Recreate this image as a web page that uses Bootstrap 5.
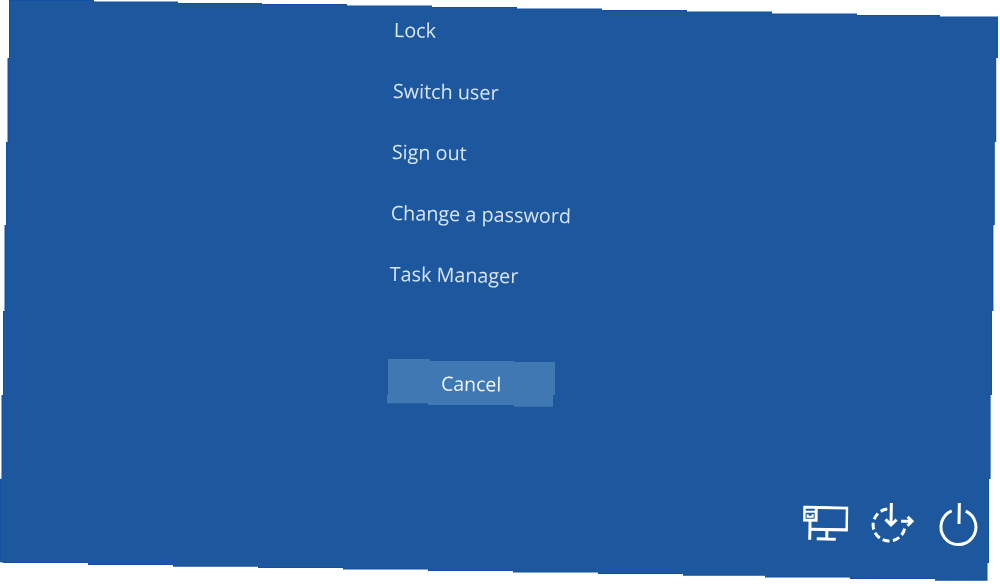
<!DOCTYPE html>
<html lang="en">
<head>
  <meta charset="UTF-8" />
  <meta name="viewport" content="width=device-width, initial-scale=1.0"/>
  <title>Security options</title>
  <link href="https://cdn.jsdelivr.net/npm/bootstrap@5.3.0/dist/css/bootstrap.min.css" rel="stylesheet"/>
  <style>
    html, body { height: 100%; }
    body { background-color: #fff; overflow: hidden; font-family: "Open Sans", "Noto Sans", sans-serif; }
    .screen-panel {
      --panel-shape: polygon(9px 0, 94px 0, 94px 1.5px, 178px 1.5px, 178px 3px, 262px 3px, 262px 4px, 347px 4px, 347px 5.5px, 432px 5.5px, 432px 7px, 517px 7px, 517px 8.5px, 602px 8.5px, 602px 10px, 687px 10px, 687px 11.5px, 772px 11.5px, 772px 13.5px, 857px 13.5px, 857px 15px, 940px 15px, 940px 16.5px, 998px 16.5px, 998px 58px, 996.2px 58px, 996.2px 142px, 994.8px 142px, 994.8px 225px, 993.4px 225px, 993.4px 311px, 992px 311px, 992px 395px, 990.6px 395px, 990.6px 479px, 989px 479px, 989px 563px, 987.5px 563px, 987.5px 580.7px, 935px 580.7px, 935px 579px, 850px 579px, 850px 577.5px, 765px 577.5px, 765px 575.7px, 683px 575.7px, 683px 574px, 598px 574px, 598px 572.5px, 513px 572.5px, 513px 571px, 428px 571px, 428px 569.5px, 343px 569.5px, 343px 568px, 258px 568px, 258px 566.7px, 173px 566.7px, 173px 565px, 88px 565px, 88px 563px, 4px 563px, 0 562px, 0 479px, 1.5px 479px, 1.5px 395px, 3px 395px, 3px 311px, 4.5px 311px, 4.5px 225px, 6px 225px, 6px 142px, 7.5px 142px, 7.5px 58px, 9px 58px);
      position: relative;
      width: 1000px; height: 584px;
      background-color: #1250a4;
      clip-path: var(--panel-shape);
    }
    .screen-panel::before {
      content: ""; position: absolute; inset: 0;
      background-color: #1d589f;
      clip-path: var(--panel-shape);
      transform: scale(.998, .9966);
    }
    .panel-content { position: relative; filter: blur(.35px); }
    .option-list {
      padding-left: 394.5px; margin-top: -1px;
      transform: rotate(1deg); transform-origin: 394px 0;
    }
    .option-item {
      display: block; width: max-content;
      color: #d8e4f1; font-size: 19.8px; line-height: 61px;
      text-decoration: none;
    }
    .cancel-wrap { padding-left: 387px; margin-top: 55px; }
    .cancel-btn {
      width: 168px; height: 48px; padding: 2px 0 0; border: 0; border-radius: 0;
      background-color: #3f78b3; color: #f2f6fa; font-size: 19.5px;
      clip-path: polygon(1px 0, 43px 0, 43px 2px, 127px 2px, 127px 3px, 168px 3px, 168px 36px, 166px 36px, 166px 47.7px, 127px 47.7px, 127px 46px, 41px 46px, 41px 44.3px, 0 44.3px, 0 36px, 1px 36px);
    }
    .cancel-btn:hover, .cancel-btn:active { background-color: #3f78b3; color: #f2f6fa; }
    .cancel-label { display: inline-block; transform: rotate(1deg); }
    .tray-icons { margin-top: 94px; padding-right: 20px; gap: 21px; }
    .tray-icons svg { transform: rotate(1deg); fill: none; stroke: #fff; stroke-width: 3; }
  </style>
</head>
<body>

  <div class="screen-panel">
    <div class="panel-content d-flex flex-column">
      <nav class="option-list">
        <a class="option-item" href="#">Lock</a>
        <a class="option-item" href="#">Switch user</a>
        <a class="option-item" href="#">Sign out</a>
        <a class="option-item" href="#">Change a password</a>
        <a class="option-item" href="#">Task Manager</a>
      </nav>

      <div class="cancel-wrap">
        <button class="btn cancel-btn" type="button"><span class="cancel-label">Cancel</span></button>
      </div>

      <div class="tray-icons d-flex justify-content-end align-items-center">
        <!-- network -->
        <svg width="45" height="36" viewBox="0 0 45 36">
          <path d="M1 1.5H44V23.5H7"/>
          <rect x="1" y="1.5" width="12" height="13" fill="#1d589f"/>
          <path d="M1 6H13M4.5 8.5V11H9.5V8.5" stroke-width="2"/>
          <path d="M7 14.5V34M14 33H33M24 23.5V33"/>
        </svg>
        <!-- accessibility / update -->
        <svg width="48" height="44" viewBox="0 0 48 44">
          <path d="M18 7.2A16 16 0 1 0 36 25" stroke-dasharray="7 3.4"/>
          <path d="M22 1V23M16.5 17.5L22 23L27.5 17.5"/>
          <path d="M32 19H43M38.5 14.5L43 19L38.5 23.5"/>
        </svg>
        <!-- power -->
        <svg width="42" height="46" viewBox="0 0 42 46">
          <path d="M13.5 10A17.5 17.5 0 1 0 27.5 10"/>
          <path d="M21 2V23"/>
        </svg>
      </div>
    </div>
  </div>

</body>
</html>
